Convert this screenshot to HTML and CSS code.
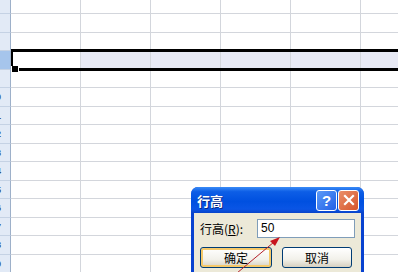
FILE: index.html
```html
<!DOCTYPE html>
<html>
<head>
<meta charset="utf-8">
<link rel="stylesheet" href="styles.css">
</head>
<body>
<div class="sheet">
  <div class="row r14"><div class="rh"></div><div class="c"></div><div class="c"></div><div class="c"></div><div class="c"></div><div class="c"></div><div class="c"></div></div>
  <div class="row r19"><div class="rh"></div><div class="c"></div><div class="c"></div><div class="c"></div><div class="c"></div><div class="c"></div><div class="c"></div></div>
  <div class="row r18"><div class="rh"></div><div class="c"></div><div class="c"></div><div class="c"></div><div class="c"></div><div class="c"></div><div class="c"></div></div>
  <div class="row r19 sel"><div class="rh"></div><div class="c active"></div><div class="c"></div><div class="c"></div><div class="c"></div><div class="c"></div><div class="c"></div></div>
  <div class="row r18"><div class="rh"></div><div class="c"></div><div class="c"></div><div class="c"></div><div class="c"></div><div class="c"></div><div class="c"></div></div>
  <div class="row r19"><div class="rh"><span class="num">0</span></div><div class="c"></div><div class="c"></div><div class="c"></div><div class="c"></div><div class="c"></div><div class="c"></div></div>
  <div class="row r18"><div class="rh"><span class="num">1</span></div><div class="c"></div><div class="c"></div><div class="c"></div><div class="c"></div><div class="c"></div><div class="c"></div></div>
  <div class="row r19"><div class="rh"><span class="num">2</span></div><div class="c"></div><div class="c"></div><div class="c"></div><div class="c"></div><div class="c"></div><div class="c"></div></div>
  <div class="row r18"><div class="rh"><span class="num">3</span></div><div class="c"></div><div class="c"></div><div class="c"></div><div class="c"></div><div class="c"></div><div class="c"></div></div>
  <div class="row r19"><div class="rh"><span class="num">4</span></div><div class="c"></div><div class="c"></div><div class="c"></div><div class="c"></div><div class="c"></div><div class="c"></div></div>
  <div class="row r18"><div class="rh"><span class="num">5</span></div><div class="c"></div><div class="c"></div><div class="c"></div><div class="c"></div><div class="c"></div><div class="c"></div></div>
  <div class="row r19"><div class="rh"><span class="num">6</span></div><div class="c"></div><div class="c"></div><div class="c"></div><div class="c"></div><div class="c"></div><div class="c"></div></div>
  <div class="row r18"><div class="rh"><span class="num">7</span></div><div class="c"></div><div class="c"></div><div class="c"></div><div class="c"></div><div class="c"></div><div class="c"></div></div>
  <div class="row r19"><div class="rh"><span class="num">8</span></div><div class="c"></div><div class="c"></div><div class="c"></div><div class="c"></div><div class="c"></div><div class="c"></div></div>
  <div class="row r18"><div class="rh"><span class="num">9</span></div><div class="c"></div><div class="c"></div><div class="c"></div><div class="c"></div><div class="c"></div><div class="c"></div></div>
</div>

<div class="selection"></div>
<div class="handle"></div>

<div class="dialog">
  <div class="titlebar">
    <span class="title">行高</span>
    <div class="tbtns">
      <div class="tbtn help">?</div>
      <div class="tbtn close">
        <svg width="12" height="12" viewBox="0 0 12 12"><path d="M2 2 L10 10 M10 2 L2 10" stroke="#fff" stroke-width="2.2" stroke-linecap="square"/></svg>
      </div>
    </div>
  </div>
  <div class="body">
    <div class="field">
      <span class="label">行高(<u>R</u>):</span>
      <div class="input">50</div>
    </div>
    <div class="buttons">
      <div class="btn default"><span>确定</span></div>
      <div class="btn"><span>取消</span></div>
    </div>
  </div>
</div>

<svg class="arrow" width="398" height="272" viewBox="0 0 398 272">
  <line x1="237" y1="273" x2="274" y2="242" stroke="#b3202a" stroke-width="1"/>
  <polygon points="280,237 270,241 275,246" fill="#c8141e"/>
</svg>
</body>
</html>
```
FILE: styles.css
```css
html, body {
  margin: 0;
  padding: 0;
  width: 398px;
  height: 272px;
  overflow: hidden;
  background: #fff;
  font-family: "Noto Sans CJK SC", "Liberation Sans", sans-serif;
}
.sheet {
  display: flex;
  flex-direction: column;
  width: 480px;
}
.row {
  display: flex;
  box-sizing: border-box;
}
.r14 { height: 14px; }
.r18 { height: 18px; }
.r19 { height: 19px; }
.rh {
  width: 11px;
  flex: none;
  box-sizing: border-box;
  background: #e2eaf6;
  border-right: 1px solid #9db0c9;
  border-bottom: 1px solid #c5d2e4;
  overflow: hidden;
}
.sel .rh { background: #a6c5ec; }
.num {
  display: block;
  margin-left: -4px;
  font: bold 9px "Liberation Sans", sans-serif;
  color: #3a4a66;
  line-height: 18px;
  white-space: nowrap;
}
.c {
  width: 70px;
  flex: none;
  box-sizing: border-box;
  border-right: 1px solid #d3d6dc;
  border-bottom: 1px solid #d3d6dc;
  background: #fff;
}
.sel .c { background: #e7e9f4; }
.sel .c.active { background: #fff; }
.selection {
  position: absolute;
  left: 11px;
  top: 49px;
  width: 387px;
  height: 22px;
  box-sizing: border-box;
  border-top: 3px solid #000;
  border-bottom: 3px solid #000;
  border-left: 2px solid #000;
}
.handle {
  position: absolute;
  left: 11px;
  top: 66px;
  width: 6px;
  height: 6px;
  background: #000;
  border: 1px solid #fff;
  border-top: none;
}
.dialog {
  position: absolute;
  left: 191px;
  top: 187px;
  width: 173px;
  height: 85px;
  display: flex;
  flex-direction: column;
  background: #0842d0;
  border-radius: 7px 7px 0 0;
  box-sizing: border-box;
  padding: 0 3px;
}
.titlebar {
  height: 26px;
  flex: none;
  display: flex;
  align-items: center;
  justify-content: space-between;
  padding: 0 3px 0 3px;
  margin: 0 -3px;
  border-radius: 7px 7px 0 0;
  background: linear-gradient(#3a8cf7 0%, #0d5ee6 18%, #0050e0 55%, #0a55e5 85%, #0843c9 100%);
}
.title {
  color: #fff;
  font-weight: bold;
  font-size: 13px;
  padding-left: 3px;
  text-shadow: 1px 1px 0 #0a2a88;
}
.tbtns {
  display: flex;
  gap: 1px;
  margin-right: 2px;
}
.tbtn {
  width: 19px;
  height: 19px;
  border: 1px solid #fff;
  border-radius: 3px;
  display: flex;
  align-items: center;
  justify-content: center;
  color: #fff;
  font: bold 15px "Liberation Sans", sans-serif;
}
.help { background: linear-gradient(135deg, #5a9af8, #2460e6); }
.close { background: linear-gradient(135deg, #ea8f6a, #d5552c); }
.body {
  flex: 1;
  background: #ece9d8;
  padding: 6px 6px 0 6px;
  display: flex;
  flex-direction: column;
  gap: 9px;
}
.field {
  display: flex;
  align-items: center;
  gap: 5px;
}
.label {
  font-size: 12px;
  color: #000;
  width: 52px;
  white-space: nowrap;
}
.input {
  width: 98px;
  height: 19px;
  box-sizing: border-box;
  background: #fff;
  border: 1px solid #7f9db9;
  font: 12px "Liberation Sans", sans-serif;
  line-height: 17px;
  padding-left: 3px;
  color: #000;
}
.buttons {
  display: flex;
  gap: 10px;
}
.btn {
  width: 70px;
  height: 21px;
  box-sizing: border-box;
  border: 1px solid #003c74;
  border-radius: 3px;
  background: linear-gradient(#ffffff, #f2f1ea 60%, #d6d0c0);
  display: flex;
  align-items: center;
  justify-content: center;
  font-size: 12px;
  color: #000;
}
.btn.default {
  width: 72px;
  box-shadow: inset 0 0 0 2px #f5c96a;
}
.arrow {
  position: absolute;
  left: 0;
  top: 0;
  pointer-events: none;
}
```
